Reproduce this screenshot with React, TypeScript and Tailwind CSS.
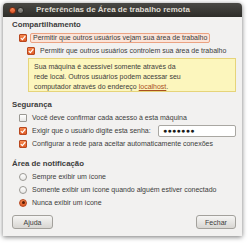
import React from "react";

function CheckBox({ checked }: { checked: boolean }) {
  if (!checked) {
    return (
      <span className="w-[8px] h-[8px] shrink-0 rounded-[1px] border border-[#9a9893] bg-gradient-to-b from-[#ffffff] to-[#e8e7e5]" />
    );
  }
  return (
    <span className="w-[8px] h-[8px] shrink-0 rounded-[1px] border border-[#b8471e] bg-gradient-to-b from-[#f58a50] to-[#df5a25] flex items-center justify-center">
      <svg width="6" height="6" viewBox="0 0 6 6">
        <path d="M0.8 3.1 L2.4 4.6 L5.3 1.2" fill="none" stroke="#ffffff" strokeWidth="1.2" />
      </svg>
    </span>
  );
}

function Radio({ checked }: { checked: boolean }) {
  return (
    <span
      className={
        checked
          ? "w-[8px] h-[8px] shrink-0 rounded-full border border-[#b8471e] bg-gradient-to-b from-[#f58a50] to-[#df5a25] flex items-center justify-center"
          : "w-[8px] h-[8px] shrink-0 rounded-full border border-[#9a9893] bg-gradient-to-b from-[#ffffff] to-[#e8e7e5]"
      }
    >
      {checked && <span className="w-[3px] h-[3px] rounded-full bg-[#5a1c05]" />}
    </span>
  );
}

function Row({ children, indent }: { children: React.ReactNode; indent: string }) {
  return <div className={"h-[13px] flex items-center gap-[3px] " + indent}>{children}</div>;
}

function Heading({ children, className }: { children: React.ReactNode; className?: string }) {
  return (
    <div className={"h-[12px] flex items-center pl-[9px] font-bold text-[7.8px] text-[#3c3c3c] " + (className ?? "")}>
      {children}
    </div>
  );
}

export default function App() {
  return (
    <div className="w-[250px] h-[243px] bg-white pt-[3px] pl-[3px]" style={{ fontFamily: '"Liberation Sans", Arial, sans-serif' }}>
      <div className="w-[239px] h-[233px] flex flex-col bg-[#f2f1f0] rounded-t-[4px] shadow-[0_1px_5px_rgba(0,0,0,0.55)] text-[7px] text-[#3c3c3c] leading-none">
        <header className="h-[14px] shrink-0 rounded-t-[4px] bg-gradient-to-b from-[#4a4945] to-[#2e2d29] flex items-center">
          <span className="ml-[6px] w-[7px] h-[7px] rounded-full bg-gradient-to-b from-[#f8885a] to-[#d9501c] border border-[#7a2a10]" />
          <span className="ml-[1px] w-[7px] h-[7px] rounded-full bg-gradient-to-b from-[#9a9893] to-[#6c6a65] border border-[#2a2925]" />
          <span className="ml-[12px] font-bold text-[8px] text-[#dfdbd2]">Preferências de Área de trabalho remota</span>
        </header>

        <main className="flex flex-col pt-[2px]">
          <Heading>Compartilhamento</Heading>
          <Row indent="pl-[16px]">
            <CheckBox checked />
            <span className="h-[10px] flex items-center px-[2px] rounded-[2px] border border-[#eba282] bg-[#fbe4d9]">
              Permitir que outros usuários vejam sua área de trabalho
            </span>
          </Row>
          <Row indent="pl-[24px]">
            <CheckBox checked />
            <span className="ml-[2px]">Permitir que outros usuários controlem sua área de trabalho</span>
          </Row>

          <div className="ml-[25px] mr-[6px] mt-[1px] h-[34px] border border-[#e6d47a] bg-[#fcf6bd] pl-[5px] pt-[2px] flex flex-col">
            <span className="h-[10px] flex items-center">Sua máquina é acessível somente através da</span>
            <span className="h-[10px] flex items-center">rede local. Outros usuários podem acessar seu</span>
            <span className="h-[10px] flex items-center">
              computador através do endereço&nbsp;<span className="underline text-[#a8501e]">localhost</span>.
            </span>
          </div>

          <Heading className="mt-[7px]">Segurança</Heading>
          <Row indent="pl-[16px]">
            <CheckBox checked={false} />
            <span className="ml-[2px]">Você deve confirmar cada acesso à esta máquina</span>
          </Row>
          <Row indent="pl-[16px] pr-[6px]">
            <CheckBox checked />
            <span className="ml-[2px]">Exigir que o usuário digite esta senha:</span>
            <span className="ml-auto w-[78px] h-[12px] rounded-[2px] border border-[#a9a7a2] bg-white flex items-center pl-[4px] text-[7px] tracking-[0.3px] text-[#1a1a1a]">
              ●●●●●●●
            </span>
          </Row>
          <Row indent="pl-[16px]">
            <CheckBox checked />
            <span className="ml-[2px]">Configurar a rede para aceitar automaticamente conexões</span>
          </Row>

          <Heading className="mt-[8px]">Área de notificação</Heading>
          <Row indent="pl-[16px]">
            <Radio checked={false} />
            <span className="ml-[2px]">Sempre exibir um ícone</span>
          </Row>
          <Row indent="pl-[16px]">
            <Radio checked={false} />
            <span className="ml-[2px]">Somente exibir um ícone quando alguém estiver conectado</span>
          </Row>
          <Row indent="pl-[16px]">
            <Radio checked />
            <span className="ml-[2px]">Nunca exibir um ícone</span>
          </Row>

          <div className="mt-[6px] flex justify-between pl-[9px] pr-[6px]">
            <button className="w-[41px] h-[14px] rounded-[3px] border border-[#a3a19c] bg-gradient-to-b from-[#f6f5f4] to-[#d8d6d2] text-[7px] text-[#3c3c3c]">
              Ajuda
            </button>
            <button className="w-[40px] h-[14px] rounded-[3px] border border-[#a3a19c] bg-gradient-to-b from-[#f6f5f4] to-[#d8d6d2] text-[7px] text-[#3c3c3c]">
              Fechar
            </button>
          </div>
        </main>
      </div>
    </div>
  );
}
